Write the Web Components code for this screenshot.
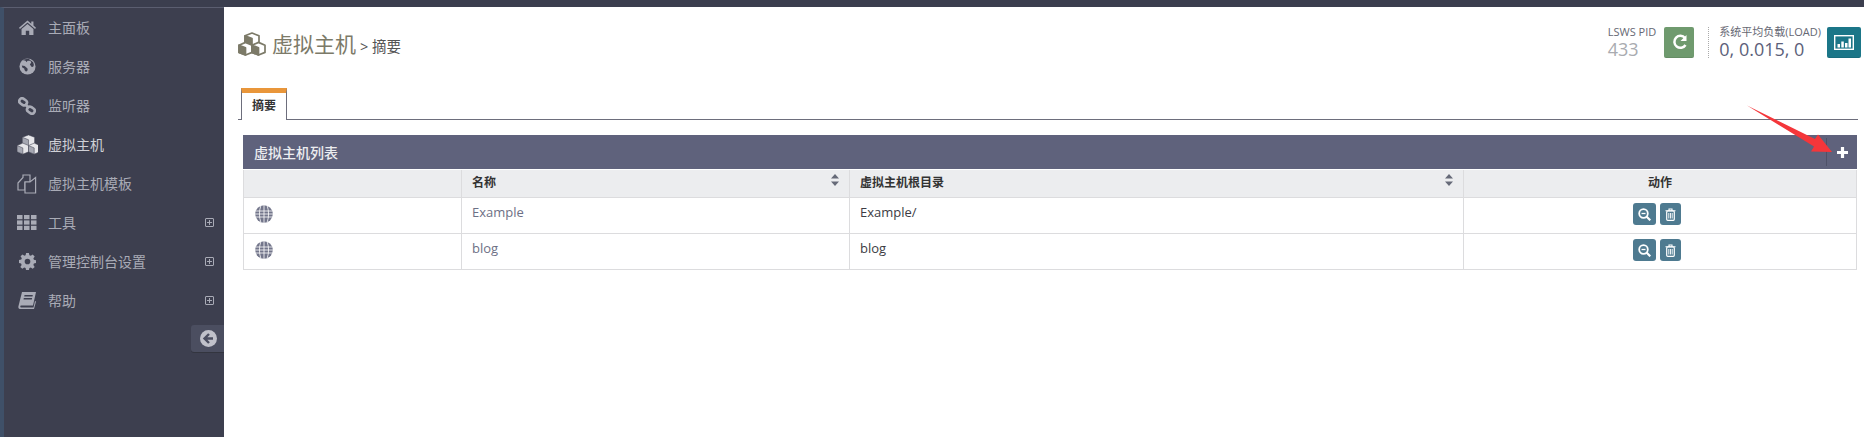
<!DOCTYPE html>
<html lang="zh"><head><meta charset="utf-8"><title>虚拟主机</title>
<style>
html,body{margin:0;padding:0;height:100%;background:#fff;overflow:hidden}
body{font-family:"Open Sans","Noto Sans CJK SC",sans-serif;font-size:13px;color:#333}
</style></head><body>
<svg width="0" height="0" style="position:absolute">
<defs>
<symbol id="i-cubes" viewBox="0 0 28 24">
<g stroke="currentColor" stroke-width="1.7" stroke-linejoin="round">
<path d="M14 1 21 3.8V11L14 13.8 7 11V3.8Z" fill="#fff"/><path d="M7 3.8 14 6.6V13.8L7 11Z" fill="currentColor"/>
<path d="M7.5 10.4 14.2 13.2V20.4L7.5 23 1 20.4V13.2Z" fill="#fff"/><path d="M1 13.2 7.5 15.9V23L1 20.4Z" fill="currentColor"/>
<path d="M20.5 10.4 27 13.2V20.4L20.5 23 14 20.4V13.2Z" fill="#fff"/><path d="M14 13.2 20.5 15.9V23L14 20.4Z" fill="currentColor"/>
</g></symbol>
<symbol id="i-cubes-nav" viewBox="0 0 28 24">
<g stroke="#3d3f4f" stroke-width=".6" stroke-linejoin="round">
<path d="M14 1 21 3.8V11L14 13.8 7 11V3.8Z" fill="#e6e6ea"/><path d="M7 3.8 14 6.6V13.8L7 11Z" fill="#a5a7b2"/>
<path d="M7.5 10.4 14.2 13.2V20.4L7.5 23 1 20.4V13.2Z" fill="#e6e6ea"/><path d="M1 13.2 7.5 15.9V23L1 20.4Z" fill="#a5a7b2"/>
<path d="M20.5 10.4 27 13.2V20.4L20.5 23 14 20.4V13.2Z" fill="#e6e6ea"/><path d="M14 13.2 20.5 15.9V23L14 20.4Z" fill="#a5a7b2"/>
</g></symbol>
<symbol id="i-home" viewBox="0 0 18 16"><path fill="currentColor" d="M9 0 13 3.4V1.2H15.3V5.4L18 7.8 17 9 9 2.3 1 9 0 7.8ZM9 3.8 15.3 9V15.5H10.8V11H7.2V15.5H2.7V9Z"/></symbol>
<symbol id="i-globe" viewBox="0 0 18 18"><circle cx="9" cy="9" r="8.5" fill="currentColor"/><path fill="#3d3f4f" d="M4 2.5C6 2 7.5 3 8 4.5L9 3 12 2.8 13 4.8 11.5 7 13.5 9.5 15 9.2 15.8 7.5 15 4.6 10 .8 5 1.6ZM3 8 6 8.6 9 11 9.2 13 7.5 14.5 6 13 5.5 11 3.5 10Z"/></symbol>
<symbol id="i-link" viewBox="0 0 18 18"><g fill="none" stroke="currentColor" stroke-width="2.6"><rect x="1" y="2" width="8" height="5.6" rx="2.8" transform="rotate(35 5 5)"/><rect x="9" y="10.4" width="8" height="5.6" rx="2.8" transform="rotate(35 13 13)"/><path d="M7 7 11 11"/></g></symbol>
<symbol id="i-files" viewBox="0 0 20 20"><g fill="#3d3f4f" stroke="currentColor" stroke-width="1.2"><path d="M1 9 6 3.5V1H13V8H8V16H1Z"/><path d="M8 8H13L18.6 3.6V19H8Z" /></g></symbol>
<symbol id="i-th" viewBox="0 0 20 15"><g fill="currentColor"><rect width="5.5" height="4.2"/><rect x="7" width="5.5" height="4.2"/><rect x="14" width="5.5" height="4.2"/><rect y="5.4" width="5.5" height="4.2"/><rect x="7" y="5.4" width="5.5" height="4.2"/><rect x="14" y="5.4" width="5.5" height="4.2"/><rect y="10.8" width="5.5" height="4.2"/><rect x="7" y="10.8" width="5.5" height="4.2"/><rect x="14" y="10.8" width="5.5" height="4.2"/></g></symbol>
<symbol id="i-gear" viewBox="0 0 18 18"><path fill="currentColor" fill-rule="evenodd" d="M7.5 0h3l.5 2.4 1.5.6 2-1.4 2.1 2.1-1.4 2 .6 1.5 2.2.5v3l-2.2.5-.6 1.5 1.4 2-2.1 2.1-2-1.4-1.5.6-.5 2.4h-3l-.5-2.4-1.5-.6-2 1.4-2.1-2.1 1.4-2-.6-1.5L0 10.500v-3l2.400-.5.6-1.500-1.400-2L3.700 1.600l2 1.400L7 2.400ZM9 6a3 3 0 1 0 0 6 3 3 0 0 0 0-6Z"/></symbol>
<symbol id="i-book" viewBox="0 0 18 17"><path fill="currentColor" d="M4 0H18L15 13.500H3C2 13.500 2 15.500 3 15.500H15.500L17 9 18 9.500 16 17H2C.5 17 0 15.500.5 14ZM6.500 3 6.200 4.400H14.500L14.800 3ZM5.800 6 5.500 7.400H13.800L14.100 6Z"/></symbol>
<symbol id="i-www" viewBox="0 0 18 18"><circle cx="9" cy="9" r="8.800" fill="currentColor"/><g fill="none" stroke="#fff" stroke-width=".8"><path d="M0 6H18M0 9H18M0 12H18"/><path d="M9 0V18M5.800 .8C4 6 4 12 5.800 17.200M12.200 .8C14 6 14 12 12.200 17.200"/></g></symbol>
</defs>
</svg>

<script>
function make(tag,html){
  customElements.define(tag,class extends HTMLElement{
    connectedCallback(){
      if(this.shadowRoot)return;
      const r=this.attachShadow({mode:'open'});
      r.innerHTML=typeof html==='function'?html(this):html;
    }
  });
}
const symbols=()=>document.querySelector('svg defs').innerHTML;
const use=(id,w,h)=>`<svg width="${w}" height="${h}" style="display:block"><defs>${symbols()}</defs><use href="#${id}" width="${w}" height="${h}"/></svg>`;

make('nav-item',el=>{
  const w=+el.getAttribute('w')||18,h=+el.getAttribute('h')||18;
  const exp=el.hasAttribute('expand');
  return `<style>
  :host{display:flex;align-items:center;height:39px;color:#a9abb6;font-size:14px;line-height:20px}
  .ic{width:22px;flex:none;display:flex;justify-content:center;margin-left:12px}
  .t{margin-left:10px;flex:1}
  .ex{box-sizing:border-box;width:9px;height:9px;border:1px solid #a9abb6;border-radius:1px;margin-right:10px;position:relative}
  .ex::before,.ex::after{content:"";position:absolute;background:#a9abb6}
  .ex::before{left:1px;right:1px;top:3px;height:1px}
  .ex::after{top:1px;bottom:1px;left:3px;width:1px}
  </style><span class="ic">${use(el.getAttribute('icon'),w,h)}</span><span class="t"><slot></slot></span>${exp?'<span class="ex"></span>':''}`;
});

make('side-bar',`<style>
:host{display:block;width:220px;background:#3d3f4f;border-left:4px solid #3f5068;border-top:1px solid #5b5e70;flex:none;position:relative}
.toggle{position:absolute;right:0;top:317px;width:33px;height:27px;background:#4b4e60;border-radius:3px 0 0 3px;display:flex;align-items:center;justify-content:center;box-shadow:0 1px 0 #33353f}
.toggle svg{margin-right:-1px}
</style><div><slot></slot></div>
<div class="toggle"><svg width="17" height="17" viewBox="0 0 17 17"><circle cx="8.500" cy="8.500" r="8.500" fill="#c0c1ca"/><path d="M9 4 4.500 8.500 9 13M5 8.500H13" fill="none" stroke="#4b4e60" stroke-width="2.400"/></svg></div>`);

make('stat-block',el=>`<style>
:host{display:flex;gap:${el.getAttribute('gap')}px;align-items:flex-start}
.txt{display:flex;flex-direction:column}
.l{font-size:11px;line-height:14px;color:#666873;white-space:nowrap;margin-top:-2px}
.v{font-size:18px;line-height:20px;color:${el.getAttribute('color')};white-space:nowrap}
.b{box-sizing:border-box;height:31px;width:${el.getAttribute('bw')}px;background:${el.getAttribute('bg')};border-radius:2px;display:flex;align-items:center;justify-content:center;border-bottom:1px solid rgba(0,0,0,.08)}
</style><div class="txt"><span class="l">${el.getAttribute('label')}</span><span class="v">${el.getAttribute('value')}</span></div><div class="b"><slot></slot></div>`);

make('page-head',`<style>
:host{display:flex;justify-content:space-between;align-items:flex-start;height:81px;box-sizing:border-box;padding:20px 0 0 0;margin-right:-3px}
.title{display:flex;align-items:center;margin-top:2px;color:#7c7a68}
.big{font-size:21px;line-height:30px;margin-left:6px}
.small{font-size:14.500px;color:#555;margin-left:4px;margin-top:3px;white-space:nowrap}
.stats{display:flex}
.sep{border-left:1px dotted #aaa;height:31px;margin:0 10px 0 14px}
</style>
<div class="title">${use('i-cubes',28,24)}<span class="big">虚拟主机</span><span class="small">&gt; 摘要</span></div>
<div class="stats"><slot name="pid"></slot><span class="sep"></span><slot name="load"></slot></div>`);

make('tab-strip',`<style>
:host{display:flex;height:32px;box-sizing:border-box;border-bottom:1px solid #6d6e7c;padding-left:3px}
.tab{box-sizing:border-box;width:46px;height:32px;background:#fff;border:1px solid #6d6e7c;border-top:5px solid #e9963a;border-bottom:0;text-align:center;font-size:12px;font-weight:700;line-height:25px;color:#333}
</style><div class="tab"><slot></slot></div>`);

make('panel-box',el=>`<style>
:host{display:block;margin:15px 1px 0 5px}
.h{height:34px;background:#5f627c;color:#ecedf0;display:flex;align-items:center;font-size:14px;font-weight:500;padding-left:11px}
.h span{flex:1}
.add{width:30px;height:28px;border-left:1px solid #4e5168;display:flex;align-items:center;justify-content:center}
</style><div class="h"><span>${el.getAttribute('heading')}</span><div class="add"><svg width="11" height="11" viewBox="0 0 11 11"><path d="M5.500 0V11M0 5.500H11" stroke="#fff" stroke-width="3.200"/></svg></div></div><slot></slot>`);

make('sort-th',`<style>
:host{display:flex;box-sizing:border-box;height:100%;padding:0 10px;font-size:12px;font-weight:700;color:#333;line-height:26px;position:relative}
svg{position:absolute;right:10px;top:4px}
</style><slot></slot><svg width="8" height="12" viewBox="0 0 8 12"><path d="M4 0 8 4.500H0ZM4 12 0 7.500H8Z" fill="#666a78"/></svg>`);

make('act-btn',el=>{
 const kind=el.getAttribute('kind');
 const s=kind==='zoom'
 ?`<svg width="13" height="13" viewBox="0 0 13 13"><circle cx="5.500" cy="5.500" r="4.300" fill="none" stroke="#fff" stroke-width="1.800"/><path d="M3.500 5.500H7.500" stroke="#fff" stroke-width="1.300"/><path d="M8.500 8.500 12.300 12.300" stroke="#fff" stroke-width="2.200"/></svg>`
 :`<svg width="11" height="13" viewBox="0 0 11 13"><path d="M.5 2.800H10.500M4 2.800V1H7V2.800" fill="none" stroke="#fff" stroke-width="1.100"/><rect x="1.700" y="3" width="7.600" height="9.300" rx="1" fill="none" stroke="#fff" stroke-width="1.200"/><path d="M3.800 5V10.500M5.500 5V10.500M7.200 5V10.500" stroke="#fff" stroke-width=".9"/></svg>`;
 return `<style>:host{display:inline-flex;align-items:center;justify-content:center;height:22px;width:${kind==='zoom'?23:21}px;background:#4e7a90;border-radius:3px}</style>${s}`;
});

make('vhost-row',el=>`<style>
:host{display:grid;grid-template-columns:218px 388px 614px 1fr;height:36px;box-sizing:border-box;border-bottom:1px solid #dcdcde;border-left:1px solid #dcdcde;border-right:1px solid #dcdcde;font-size:13px}
.c{border-right:1px solid #dcdcde;box-sizing:border-box;padding:0 10px;line-height:29px}
.ic{padding:7px 0 0 11px;color:#72758a}
.act{border-right:0;display:flex;justify-content:center;gap:4px;padding:5px 17px 0 10px}
a{color:#6d7085;text-decoration:none}
</style>
<div class="c ic">${use('i-www',18,18)}</div><div class="c"><a>${el.getAttribute('name')}</a></div><div class="c" style="color:#3c3c44">${el.getAttribute('root')}</div><div class="c act"><act-btn kind="zoom"></act-btn><act-btn kind="trash"></act-btn></div>`);

make('vhost-head',`<style>
:host{display:grid;grid-template-columns:218px 388px 614px 1fr;height:28px;box-sizing:border-box;background:#ecedef;border-bottom:1px solid #dcdcde;border-left:1px solid #dcdcde;border-right:1px solid #dcdcde;margin-top:1px}
div{border-right:1px solid #dcdcde;box-sizing:border-box}
.last{border-right:0;text-align:center;font-size:12px;font-weight:700;color:#333;line-height:26px}
</style><div></div><div><sort-th>名称</sort-th></div><div><sort-th>虚拟主机根目录</sort-th></div><div class="last">动作</div>`);

make('app-shell',`<style>
:host{display:flex;flex-direction:column;height:437px;position:relative}
.top{height:7px;background:#3b3e4e;flex:none}
.body{flex:1;display:flex;min-height:0}
main{flex:1;min-width:0;padding:0 6px 0 14px}
.arrow{position:absolute;left:0;top:0;pointer-events:none}
</style><div class="top"></div><div class="body"><slot name="side"></slot><main><slot></slot></main></div>
<svg class="arrow" width="1864" height="437"><path fill="#f4363a" d="M1747 105.500 1815 139 1818 134.500 1832 152 1811 151.500 1814 146.500Z"/></svg>`);
</script>

<app-shell>
  <side-bar slot="side">
    <nav-item icon="i-home" w="17" h="16">主面板</nav-item>
    <nav-item icon="i-globe" w="17" h="17">服务器</nav-item>
    <nav-item icon="i-link" w="18" h="18">监听器</nav-item>
    <nav-item icon="i-cubes-nav" w="25" h="21" style="color:#cfd0d6">虚拟主机</nav-item>
    <nav-item icon="i-files" w="20" h="20">虚拟主机模板</nav-item>
    <nav-item icon="i-th" w="20" h="15" expand>工具</nav-item>
    <nav-item icon="i-gear" w="17" h="17" expand>管理控制台设置</nav-item>
    <nav-item icon="i-book" w="18" h="17" expand>帮助</nav-item>
  </side-bar>
  <page-head>
    <stat-block slot="pid" gap="8" label="LSWS PID" value="433" color="#a9abb0" bg="#6f9a6e" bw="30"><svg width="17" height="17" viewBox="0 0 17 17"><path d="M14 4A6 6 0 1 0 14.500 11" fill="none" stroke="#fff" stroke-width="2.500"/><path d="M15.500 1V7H9.500Z" fill="#fff"/></svg></stat-block>
    <stat-block slot="load" gap="6" label="系统平均负载(LOAD)" value="0, 0.015, 0" color="#5c5f7a" bg="#1b7688" bw="34"><svg width="20" height="15" viewBox="0 0 20 15"><rect x=".7" y=".7" width="18.600" height="13.600" fill="none" stroke="#fff" stroke-width="1.400"/><path fill="#fff" d="M3.500 9H6V12.500H3.500ZM7.300 6.500H9.800V12.500H7.300ZM11 8H13.500V12.500H11ZM14.500 3.500H17V12.500H14.500Z"/></svg></stat-block>
  </page-head>
  <tab-strip>摘要</tab-strip>
  <panel-box heading="虚拟主机列表">
    <vhost-head></vhost-head>
    <vhost-row name="Example" root="Example/"></vhost-row>
    <vhost-row name="blog" root="blog"></vhost-row>
  </panel-box>
</app-shell>
</body></html>
